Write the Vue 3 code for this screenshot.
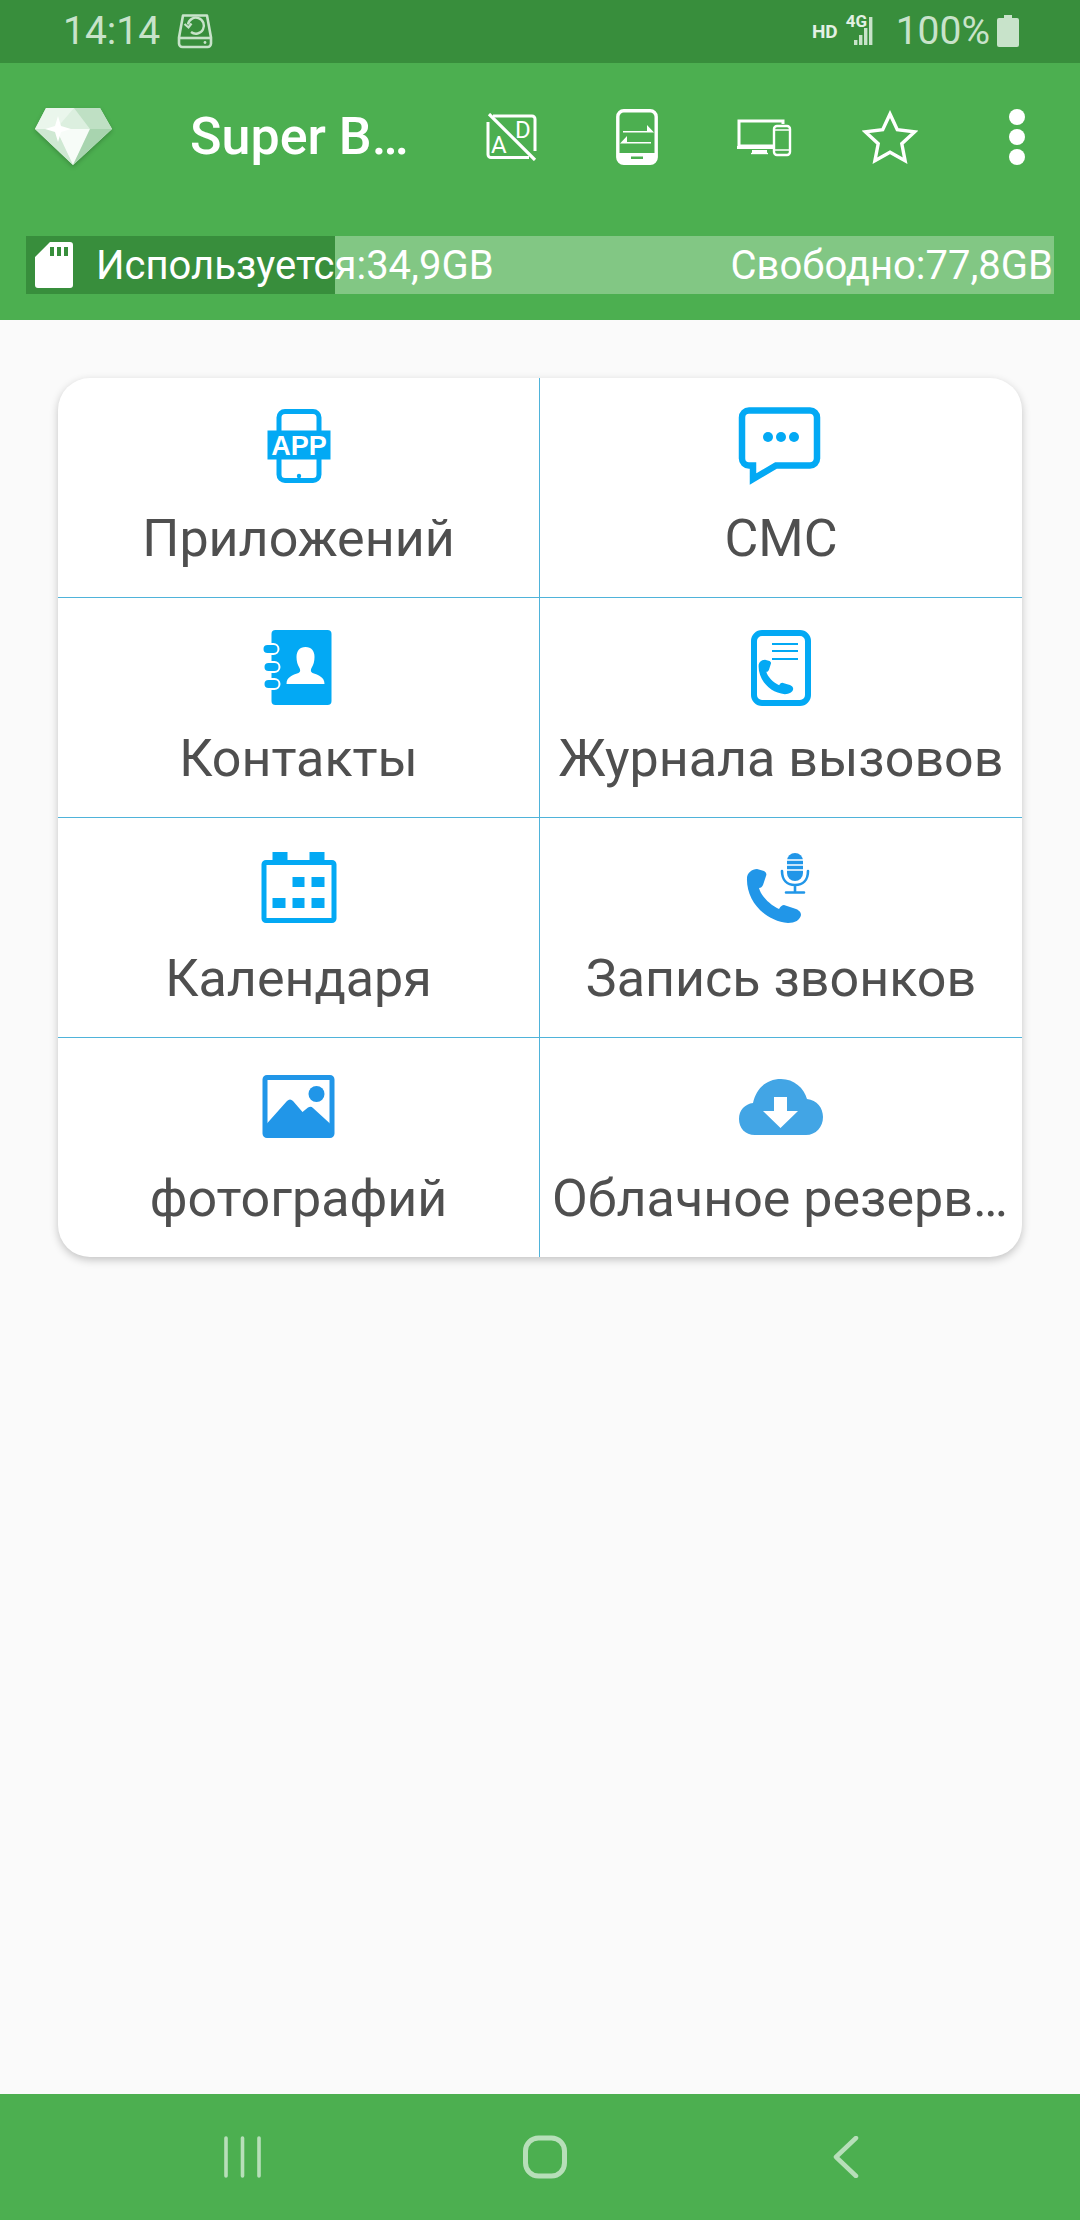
<script setup>
const signalBars = [
  { x: 8, y: 24, h: 5 },
  { x: 13, y: 19, h: 10 },
  { x: 18, y: 12, h: 17 },
  { x: 23, y: 1, h: 28 }
]
</script>

<template>
  <div class="screen">
    <header class="status">
      <div class="status-side">
        <span class="clock">14:14</span>
        <svg class="disk" width="36" height="36" viewBox="0 0 36 36" fill="none" stroke="currentColor">
          <path d="M6 2.500h24l4 22v6a3.500 3.500 0 0 1-3.500 3.500h-25a3.500 3.500 0 0 1-3.500-3.500v-6z" stroke-width="2.600" stroke-linejoin="round" />
          <path d="M2 25h32" stroke-width="2.600" />
          <path d="M11 11.500a8 8 0 1 1 3 7.500" stroke-width="2.400" />
          <path d="M7.500 11l4 3.500 3-4" stroke-width="2.200" />
          <circle cx="28" cy="29.500" r="1.400" fill="currentColor" stroke="none" />
        </svg>
      </div>
      <div class="status-side">
        <span class="hd">HD</span>
        <span class="signal">
          <span class="net">4G</span>
          <svg width="36" height="30" viewBox="0 0 36 30" fill="currentColor">
            <rect v-for="b in signalBars" :key="b.x" :x="b.x" :y="b.y" width="3.400" :height="b.h" />
          </svg>
        </span>
        <span class="percent">100%</span>
        <svg class="battery" width="22" height="32" viewBox="0 0 22 32" fill="currentColor">
          <path d="M7 0h8v3h5a2 2 0 0 1 2 2v25a2 2 0 0 1-2 2H2a2 2 0 0 1-2-2V5a2 2 0 0 1 2-2h5z" />
        </svg>
      </div>
    </header>

    <div class="appbar">
      <div class="toolbar">
        <svg class="diamond" width="80" height="60" viewBox="0 0 80 60">
          <path d="M12 1h54l12 21-39 36L1 22z" fill="#dcefdf" />
          <path d="M12 1h28L22 22H1z" fill="#eaf6ec" />
          <path d="M40 1h26l12 21H56z" fill="#bfe0c4" />
          <path d="M22 22h34L39 58z" fill="#f7fcf8" />
          <path d="M1 22h21l17 36z" fill="#cfe8d3" />
          <path d="M56 22h22L39 58z" fill="#a8d4af" />
          <path d="M24 9l3 10 10 3-10 3-3 10-3-10-10-3 10-3z" fill="#ffffff" />
        </svg>
        <h1 class="title">Super Backup</h1>
        <div class="actions">
          <button class="action" aria-label="Реклама">
            <svg width="54" height="48" viewBox="0 0 54 48" fill="none" stroke="#fff">
              <path d="M9 3h39a3 3 0 0 1 3 3v32M45 44.500H7a3 3 0 0 1-3-3V9" stroke-width="3" />
              <path d="M5 1l46 46" stroke-width="3.200" />
              <text x="7" y="40" class="ad-letter">A</text>
              <text x="31" y="25" class="ad-letter">D</text>
            </svg>
          </button>
          <button class="action" aria-label="Перенос">
            <svg width="42" height="56" viewBox="0 0 42 56" fill="none">
              <rect x="1.800" y="1.800" width="38.400" height="52.400" rx="6" stroke="#fff" stroke-width="3.400" />
              <path d="M3 44h36v6a4 4 0 0 1-4 4H7a4 4 0 0 1-4-4z" fill="#fff" />
              <rect x="15" y="47.500" width="12" height="2.500" fill="#4caf50" />
              <path d="M7 22h24v-6l7 7.500H7zM35 33H11v-6l-7 7.500h31z" fill="#fff" />
            </svg>
          </button>
          <button class="action" aria-label="Устройства">
            <svg width="56" height="40" viewBox="0 0 56 40" fill="none" stroke="#fff">
              <path d="M37 29H3V4h44v3" stroke-width="3" />
              <path d="M1 29h37v3H1z" fill="#fff" stroke="none" />
              <path d="M16 33h15v3H16z" fill="#fff" stroke="none" />
              <path d="M15 36.500h17" stroke-width="1.400" />
              <rect x="38" y="9" width="16" height="29" rx="3" stroke-width="2.400" />
              <path d="M39 13h14M39 33h14" stroke-width="1.400" />
            </svg>
          </button>
          <button class="action" aria-label="Избранное">
            <svg width="56" height="54" viewBox="0 0 56 54" fill="none">
              <path d="M28 4l7.300 15.800 17.200 2.100-12.700 11.800 3.300 17L28 42.200 12.900 50.700l3.300-17L3.500 21.900l17.200-2.100z" stroke="#fff" stroke-width="3.400" stroke-linejoin="miter" />
            </svg>
          </button>
          <button class="action" aria-label="Меню">
            <span class="dots"><i></i><i></i><i></i></span>
          </button>
        </div>
      </div>

      <div class="storage">
        <div class="used">
          <svg class="sd" width="38" height="46" viewBox="0 0 38 46" fill="#fff">
            <path fill-rule="evenodd" d="M15 0h20a3 3 0 0 1 3 3v40a3 3 0 0 1-3 3H3a3 3 0 0 1-3-3V15zM15 5v9h4V5zM22 5v9h4V5zM29 5v9h4V5z" />
          </svg>
          <span class="used-text">Используется:34,9GB</span>
        </div>
        <span class="free-text">Свободно:77,8GB</span>
      </div>
    </div>

    <main class="content">
      <section class="card">
        <div class="cell">
          <svg class="icon" width="100" height="80" viewBox="0 0 100 80">
            <rect x="30" y="5.500" width="40" height="69" rx="6" fill="none" stroke="#03a9f4" stroke-width="5" />
            <rect x="18.500" y="24.500" width="63" height="29" fill="#03a9f4" />
            <circle cx="50" cy="70" r="2.200" fill="#03a9f4" />
            <text x="50" y="48.500" class="app-text">APP</text>
          </svg>
          <span class="label">Приложений</span>
        </div>
        <div class="cell">
          <svg class="icon" width="100" height="80" viewBox="0 0 100 80">
            <path d="M18 4.500h61a7 7 0 0 1 7 7v41a7 7 0 0 1-7 7H45L22 73V59.500h-4a7 7 0 0 1-7-7v-41a7 7 0 0 1 7-7z" fill="none" stroke="#03a9f4" stroke-width="6.500" />
            <circle cx="37" cy="31" r="5" fill="#03a9f4" />
            <circle cx="50" cy="31" r="5" fill="#03a9f4" />
            <circle cx="63" cy="31" r="5" fill="#03a9f4" />
          </svg>
          <span class="label">СМС</span>
        </div>

        <div class="cell">
          <svg class="icon" width="100" height="80" viewBox="0 0 100 80">
            <rect x="22.500" y="4" width="60" height="75" rx="4" fill="#03a9f4" />
            <g fill="#03a9f4" stroke="#fff" stroke-width="2">
              <rect x="13.500" y="18" width="16" height="10" rx="5" />
              <rect x="14.500" y="36" width="16" height="10" rx="5" />
              <rect x="14.500" y="53" width="16" height="10" rx="5" />
            </g>
            <path d="M37.500 58c0-7 6-9 12-11 2-1 2-3 1-5-2-3-3-7-3-11 0-6 3-10 9-10s9 4 9 10c0 4-1 8-3 11-1 2-1 4 1 5 6 2 12 4 12 11z" fill="#fff" />
          </svg>
          <span class="label">Контакты</span>
        </div>
        <div class="cell">
          <svg class="icon" width="100" height="80" viewBox="0 0 100 80">
            <rect x="23" y="7" width="54" height="70" rx="8" fill="none" stroke="#03a9f4" stroke-width="6" />
            <path d="M41 18h26M41 25h26M41 33h26" stroke="#03a9f4" stroke-width="2" />
            <path transform="translate(27 33) scale(.64)" d="M11 1l7 2c2 1 3 3 2 5l-3 9c-1 2-2 3-4 3 2 8 11 17 20 21 2-3 3-4 5-4l9 3c4 1 8 3 8 7-1 5-6 8-13 8C18 53 0 32 1 10 1 5 6 1 11 1z" fill="#03a9f4" />
          </svg>
          <span class="label">Журнала вызовов</span>
        </div>

        <div class="cell">
          <svg class="icon" width="100" height="80" viewBox="0 0 100 80">
            <rect x="15" y="16.500" width="70" height="58" rx="2" fill="none" stroke="#03a9f4" stroke-width="5" />
            <path d="M23.500 6h15v10h-15zM60.500 6h15v10h-15z" fill="#03a9f4" />
            <path d="M43.500 31h12v10h-12zM62.500 31h13v10h-13zM23.500 52h13v10h-13zM43.500 52h12v10h-12zM62.500 52h13v10h-13z" fill="#03a9f4" />
          </svg>
          <span class="label">Календаря</span>
        </div>
        <div class="cell">
          <svg class="icon" width="100" height="80" viewBox="0 0 100 80">
            <path transform="translate(15 22)" d="M11 1l7 2c2 1 3 3 2 5l-3 9c-1 2-2 3-4 3 2 8 11 17 20 21 2-3 3-4 5-4l9 3c4 1 8 3 8 7-1 5-6 8-13 8C18 53 0 32 1 10 1 5 6 1 11 1z" fill="#2196e8" />
            <rect x="56" y="7" width="16" height="28" rx="8" fill="#2196e8" />
            <path d="M56 14h16M56 19h16M56 24h16" stroke="#fff" stroke-width="1.600" />
            <path d="M51 25c0 9 5 14 13 14s13-5 13-14M64 39v7M55 46.500h18" fill="none" stroke="#2196e8" stroke-width="2.600" stroke-linecap="round" />
          </svg>
          <span class="label">Запись звонков</span>
        </div>

        <div class="cell">
          <svg class="icon" width="100" height="80" viewBox="0 0 100 80">
            <rect x="16" y="11.500" width="67" height="58" rx="2" fill="none" stroke="#2196e8" stroke-width="5" />
            <circle cx="67.500" cy="28" r="8" fill="#2196e8" />
            <path d="M17.500 58L38 35c2-2 4-2 6 0l9.500 11L59 41.500c2-1 3.500-1 5 .500L81.500 58v10h-64z" fill="#2196e8" />
          </svg>
          <span class="label">фотографий</span>
        </div>
        <div class="cell">
          <svg class="icon" width="100" height="80" viewBox="0 0 100 80">
            <path d="M24 69C14 69 8 62 8 53c0-9 6-15 14-16 3-14 13-24 28-24 13 0 23 9 26 20 10 1 16 9 16 18 0 10-7 18-17 18z" fill="#42a5e5" />
            <path d="M43 31h13v14h11L49.500 62 32 45h11z" fill="#fff" />
          </svg>
          <span class="label">Облачное резервное копирование</span>
        </div>
      </section>
    </main>

    <nav class="navbar">
      <svg width="37" height="42" viewBox="0 0 37 42" stroke="#b7dfb9" stroke-width="3.600" stroke-linecap="round">
        <path d="M2 2v38M18.500 2v38M35 2v38" />
      </svg>
      <svg width="44" height="44" viewBox="0 0 44 44" fill="none" stroke="#b7dfb9" stroke-width="5">
        <rect x="2.500" y="3" width="39" height="38" rx="13" />
      </svg>
      <svg width="26" height="42" viewBox="0 0 26 42" fill="none" stroke="#b7dfb9" stroke-width="4.500" stroke-linecap="round" stroke-linejoin="round">
        <path d="M23 2L3 21l20 19" />
      </svg>
    </nav>
  </div>
</template>

<style scoped>
.screen {
  width: 1080px;
  height: 2220px;
  display: flex;
  flex-direction: column;
  background: #fafafa;
  font-family: Roboto, "Noto Sans", sans-serif;
  overflow: hidden;
}

.status {
  height: 63px;
  flex: none;
  background: #388e3c;
  color: #c8e3ca;
  display: flex;
  justify-content: space-between;
  align-items: center;
  padding: 0 61px 0 63px;
}
.status-side {
  display: flex;
  align-items: center;
}
.clock,
.percent {
  font-size: 39px;
  line-height: 63px;
}
.disk {
  margin-left: 17px;
  margin-top: -2px;
}
.hd {
  font-size: 19px;
  font-weight: 700;
  color: #e3f1e4;
  margin-right: 8px;
}
.signal {
  position: relative;
  width: 36px;
  height: 30px;
  margin-right: 14px;
  margin-top: -2px;
  display: block;
}
.signal svg {
  display: block;
}
.net {
  position: absolute;
  left: 0;
  top: -3px;
  font-size: 17px;
  line-height: 17px;
  font-weight: 700;
  color: #e3f1e4;
}
.battery {
  margin-left: 7px;
  margin-top: -1px;
}

.appbar {
  flex: none;
  height: 257px;
  background: #4caf50;
  display: flex;
  flex-direction: column;
}
.toolbar {
  height: 147px;
  display: flex;
  align-items: center;
  padding-left: 34px;
}
.diamond {
  flex: none;
  filter: drop-shadow(0 2px 2px rgba(0, 0, 0, 0.2));
}
.title {
  margin: 0 0 0 76px;
  width: 235px;
  font-size: 52px;
  font-weight: 500;
  color: #fff;
  white-space: nowrap;
  overflow: hidden;
  text-overflow: ellipsis;
}
.actions {
  margin-left: auto;
  display: flex;
}
.action {
  width: 126.500px;
  height: 100px;
  padding: 0;
  border: 0;
  background: none;
  display: flex;
  align-items: center;
  justify-content: center;
}
.ad-letter {
  font-family: Roboto, sans-serif;
  font-size: 24px;
  fill: #fff;
  stroke: none;
}
.dots {
  display: flex;
  flex-direction: column;
  gap: 4px;
}
.dots i {
  width: 16px;
  height: 16px;
  border-radius: 50%;
  background: #fff;
}

.storage {
  margin: 26px 26px 0;
  height: 58px;
  background: rgba(255, 255, 255, 0.3);
  display: flex;
  justify-content: space-between;
  align-items: center;
  color: #fff;
  font-size: 40px;
  position: relative;
}
.used {
  width: 309px;
  height: 58px;
  background: #388e3c;
  display: flex;
  align-items: center;
  padding-left: 9px;
  box-sizing: border-box;
  white-space: nowrap;
}
.sd {
  flex: none;
}
.used-text {
  margin-left: 23px;
}
.free-text {
  padding-right: 1px;
}

.content {
  flex: 1;
  padding: 58px 58px 0;
}
.card {
  height: 879px;
  background: #fff;
  border-radius: 32px;
  box-shadow: 0 3px 8px rgba(0, 0, 0, 0.22);
  overflow: hidden;
  display: grid;
  grid-template-columns: 482px 482px;
  grid-template-rows: 220px 220px 220px 219px;
}
.cell {
  box-sizing: border-box;
  min-width: 0;
  padding: 28px 12px 0;
  display: flex;
  flex-direction: column;
  align-items: center;
  border-bottom: 1px solid #4fb3da;
}
.cell:nth-child(odd) {
  border-right: 1px solid #4fb3da;
}
.cell:nth-last-child(-n + 2) {
  border-bottom: 0;
}
.icon {
  flex: none;
  display: block;
}
.app-text {
  font-family: "Liberation Sans", sans-serif;
  font-size: 27px;
  font-weight: 700;
  fill: #fff;
  text-anchor: middle;
}
.label {
  display: block;
  max-width: 100%;
  margin-top: 22px;
  font-size: 52px;
  line-height: 62px;
  color: #4f4f4f;
  white-space: nowrap;
  overflow: hidden;
  text-overflow: ellipsis;
}

.navbar {
  flex: none;
  height: 126px;
  background: #4caf50;
  display: flex;
  align-items: center;
  padding-left: 224px;
  gap: 0;
}
.navbar svg:nth-child(2) {
  margin-left: 262px;
}
.navbar svg:nth-child(3) {
  margin-left: 266px;
}
</style>
